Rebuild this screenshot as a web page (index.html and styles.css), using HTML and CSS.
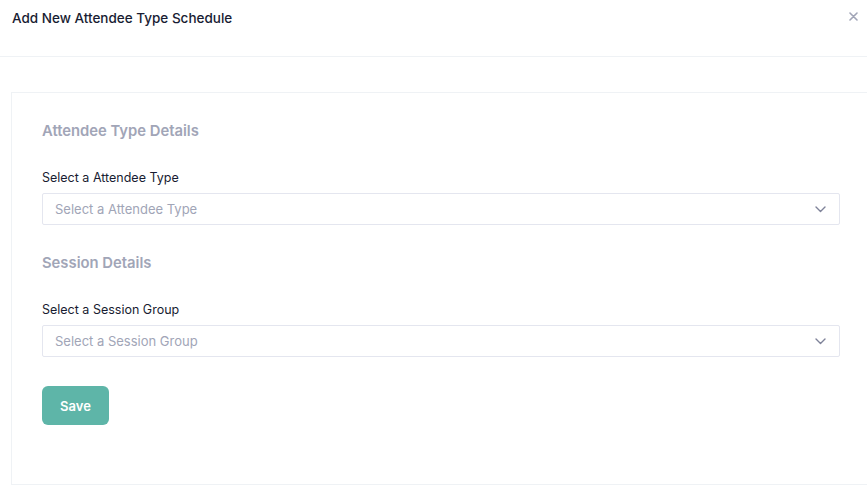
FILE: index.html
```html
<!DOCTYPE html>
<html>
<head>
<meta charset="utf-8">
<link rel="stylesheet" href="styles.css">
</head>
<body>
<div class="modal">
  <div class="modal-header">
    <h1 class="modal-title">Add New Attendee Type Schedule</h1>
    <button class="close" aria-label="Close">
      <svg width="9" height="9" viewBox="0 0 9 9"><path d="M1 1L8 8M8 1L1 8" stroke="#a1a5b7" stroke-width="1.6" stroke-linecap="round"/></svg>
    </button>
  </div>
  <div class="modal-body">
    <div class="card">
      <h2 class="section-title">Attendee Type Details</h2>
      <label class="field-label">Select a Attendee Type</label>
      <div class="select">
        <span class="placeholder">Select a Attendee Type</span>
        <svg class="chevron" width="11" height="7" viewBox="0 0 11 7"><path d="M1 1L5.5 5.5L10 1" fill="none" stroke="#7e8299" stroke-width="1.4" stroke-linecap="round" stroke-linejoin="round"/></svg>
      </div>
      <h2 class="section-title second">Session Details</h2>
      <label class="field-label">Select a Session Group</label>
      <div class="select">
        <span class="placeholder">Select a Session Group</span>
        <svg class="chevron" width="11" height="7" viewBox="0 0 11 7"><path d="M1 1L5.5 5.5L10 1" fill="none" stroke="#7e8299" stroke-width="1.4" stroke-linecap="round" stroke-linejoin="round"/></svg>
      </div>
      <div class="actions">
        <button class="btn-save">Save</button>
      </div>
    </div>
  </div>
</div>
</body>
</html>
```

FILE: styles.css
```css
* { box-sizing: border-box; }
html, body {
  margin: 0;
  padding: 0;
  background: #fff;
  overflow: hidden;
  font-family: Inter, "Noto Sans", sans-serif;
}
.modal {
  width: 882px;
}
.modal-header {
  height: 57px;
  border-bottom: 1px solid #eff2f5;
  display: flex;
  align-items: flex-start;
  justify-content: space-between;
  padding: 10px 0 0 12px;
  width: 867px;
}
.modal-title {
  margin: 0;
  font-size: 13.5px;
  line-height: 17px;
  font-weight: 500;
  color: #181c32;
}
.close {
  border: 0;
  background: none;
  padding: 0;
  margin: 2px 9px 0 0;
  width: 9px;
  height: 9px;
  display: flex;
  cursor: pointer;
}
.modal-body {
  padding: 35px 11px 0 11px;
}
.card {
  border: 1px solid #eff2f5;
  padding: 28px 30px 59px 30px;
  display: flex;
  flex-direction: column;
}
.section-title {
  margin: 0;
  font-size: 14.8px;
  line-height: 20px;
  font-weight: 600;
  color: #a1a5b7;
}
.section-title.second {
  margin-top: 28px;
}
.field-label {
  margin-top: 28px;
  font-size: 12.5px;
  line-height: 18px;
  color: #181c32;
}
.select {
  margin-top: 6px;
  height: 32px;
  border: 1px solid #e4e6ef;
  border-radius: 2px;
  display: flex;
  align-items: center;
  justify-content: space-between;
  padding: 0 13px 0 12px;
}
.placeholder {
  font-size: 13px;
  color: #a1a5b7;
}
.chevron { display: block; }
.actions {
  margin-top: 29px;
}
.btn-save {
  width: 67px;
  height: 39px;
  border: 0;
  border-radius: 6px;
  background: #5eb5a8;
  color: #fff;
  font-family: Inter, "Noto Sans", sans-serif;
  font-size: 13px;
  font-weight: 600;
  cursor: pointer;
}
```
